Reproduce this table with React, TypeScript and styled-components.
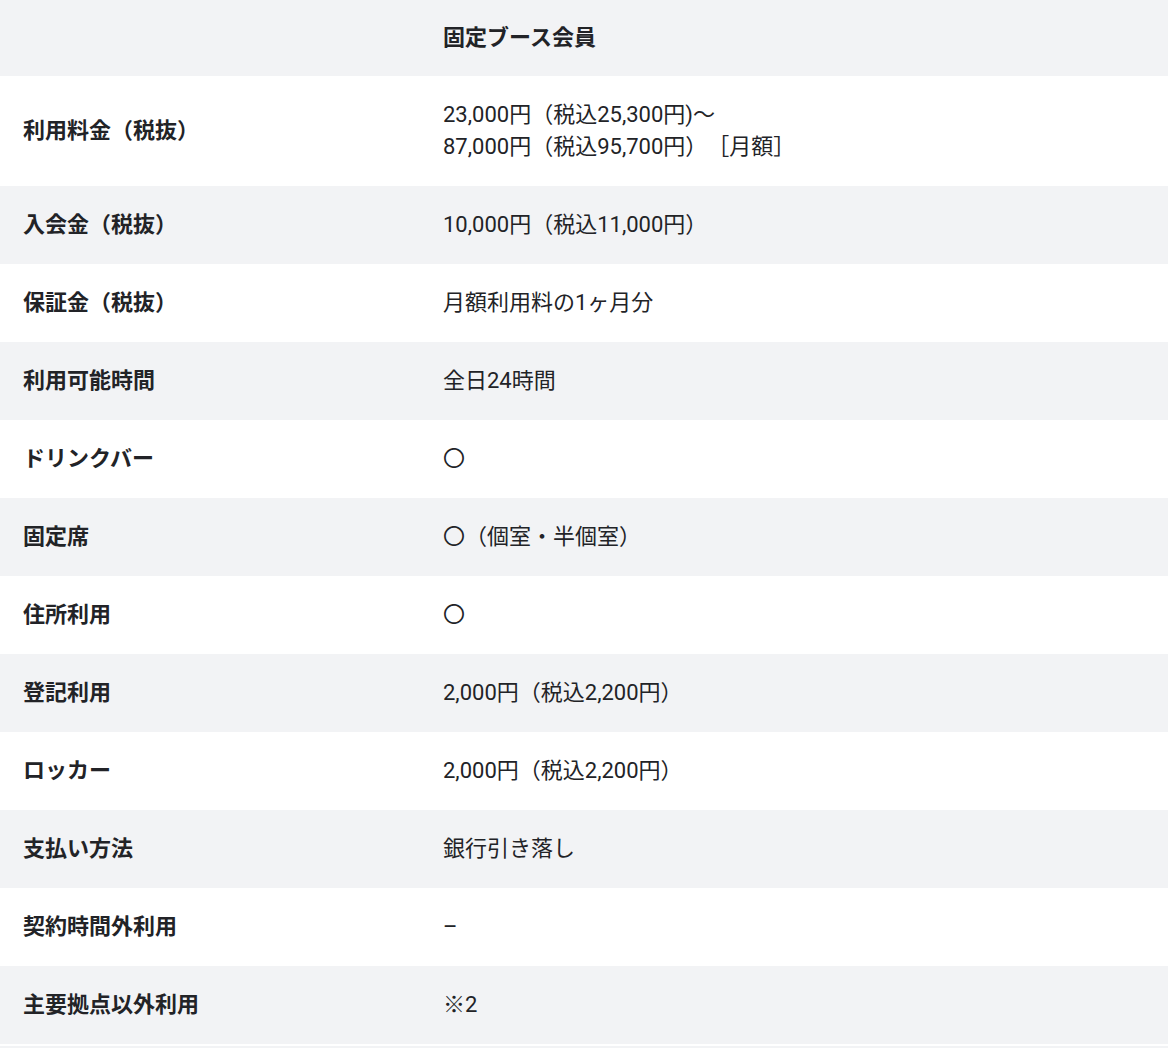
import React from "react";
import styled, { createGlobalStyle } from "styled-components";

const GlobalStyle = createGlobalStyle`
  html, body { margin: 0; padding: 0; background: #ffffff; }
  body {
    font-family: Roboto, "Noto Sans CJK JP", "Noto Sans", sans-serif;
    color: #222327;
  }
`;

const Table = styled.div`
  width: 1168px;
  display: flex;
  flex-direction: column;
`;

const Row = styled.div<{ $shade: boolean; $header?: boolean }>`
  display: grid;
  grid-template-columns: 420px 1fr;
  align-items: center;
  min-height: ${(p) => (p.$header ? "76px" : "78px")};
  padding: ${(p) => (p.$header ? "0" : "23px")} 23px;
  box-sizing: border-box;
  background: ${(p) => (p.$shade ? "#f2f3f5" : "#ffffff")};
`;

const Label = styled.div`
  font-size: 22px;
  font-weight: 700;
  line-height: 32px;
  text-spacing-trim: space-all;
`;

const Value = styled.div<{ $bold?: boolean }>`
  font-size: 22px;
  font-weight: ${(p) => (p.$bold ? 700 : 400)};
  line-height: 32px;
  white-space: pre-line;
  text-spacing-trim: space-all;
`;

const Tail = styled.div`
  height: 4px;
  width: 1168px;
  border-top: 2px solid #ffffff;
  background: #f2f3f5;
`;

const rows: [string, string][] = [
  ["利用料金（税抜）", "23,000円（税込25,300円)〜\n87,000円（税込95,700円）［月額］"],
  ["入会金（税抜）", "10,000円（税込11,000円）"],
  ["保証金（税抜）", "月額利用料の1ヶ月分"],
  ["利用可能時間", "全日24時間"],
  ["ドリンクバー", "〇"],
  ["固定席", "〇（個室・半個室）"],
  ["住所利用", "〇"],
  ["登記利用", "2,000円（税込2,200円）"],
  ["ロッカー", "2,000円（税込2,200円）"],
  ["支払い方法", "銀行引き落し"],
  ["契約時間外利用", "–"],
  ["主要拠点以外利用", "※2"],
];

export default function App() {
  return (
    <>
      <GlobalStyle />
      <Table>
        <Row $shade $header>
          <Label />
          <Value $bold>固定ブース会員</Value>
        </Row>
        {rows.map(([k, v], i) => (
          <Row key={k} $shade={i % 2 === 1}>
            <Label>{k}</Label>
            <Value>{v}</Value>
          </Row>
        ))}
        <Tail />
      </Table>
    </>
  );
}
